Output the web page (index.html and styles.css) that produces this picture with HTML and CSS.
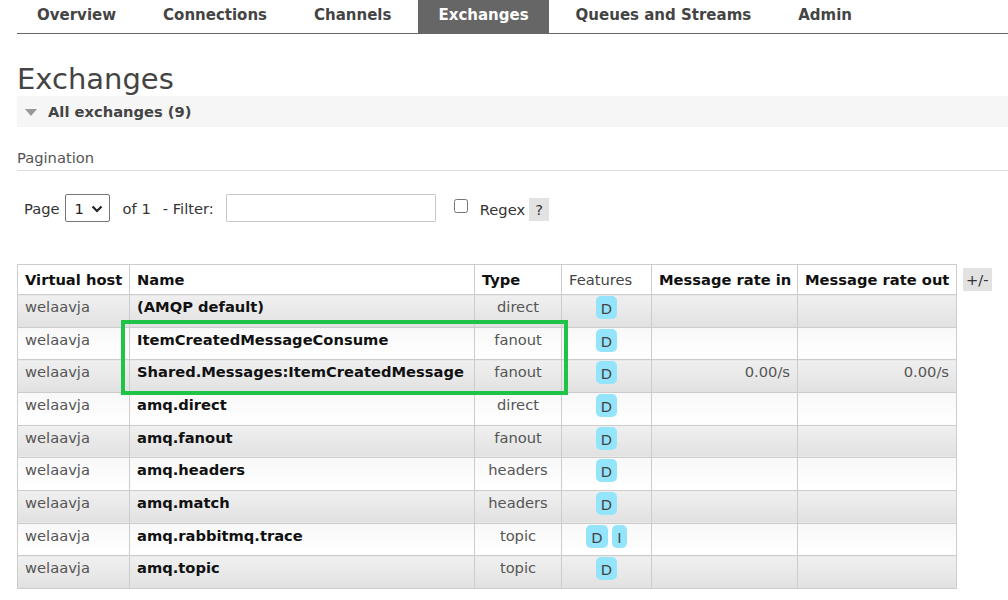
FILE: index.html
```html
<!DOCTYPE html>
<html lang="en">
<head>
<meta charset="utf-8">
<title>Exchanges</title>
<link rel="stylesheet" href="styles.css">
</head>
<body>
<nav class="tabs">
  <ul>
    <li><a>Overview</a></li>
    <li><a>Connections</a></li>
    <li><a>Channels</a></li>
    <li class="active"><a>Exchanges</a></li>
    <li><a>Queues and Streams</a></li>
    <li><a>Admin</a></li>
  </ul>
</nav>
<main class="main">
  <h1 class="title">Exchanges</h1>
  <section class="section">
    <h2 class="section-head"><span class="tri"></span>All exchanges (9)</h2>
    <h3 class="pag-title">Pagination</h3>
    <div class="pager">
      <span class="lbl">Page</span>
      <span class="select-wrap">
        <select class="select"><option>1</option></select>
        <svg class="chev" width="12" height="8" viewBox="0 0 12 8"><path d="M1.5 1.5 L6 6 L10.5 1.5" fill="none" stroke="#222" stroke-width="2.2"/></svg>
      </span>
      <span class="lbl of">of 1</span>
      <span class="lbl filter">- Filter:</span>
      <input class="input" type="text">
      <input class="check" type="checkbox">
      <span class="lbl regex">Regex</span>
      <span class="help">?</span>
    </div>
    <div class="table-wrap">
      <table class="list">
        <colgroup>
          <col class="c-vh"><col class="c-name"><col class="c-type"><col class="c-feat"><col class="c-in"><col class="c-out">
        </colgroup>
        <thead>
          <tr>
            <th>Virtual host</th>
            <th>Name</th>
            <th>Type</th>
            <th class="plain">Features</th>
            <th>Message rate in</th>
            <th>Message rate out</th>
          </tr>
        </thead>
        <tbody>
          <tr class="alt"><td class="vh">welaavja</td><td class="nm">(AMQP default)</td><td class="ty">direct</td><td class="ft"><abbr class="badge">D</abbr></td><td class="rt"></td><td class="rt"></td></tr>
          <tr><td class="vh">welaavja</td><td class="nm">ItemCreatedMessageConsume</td><td class="ty">fanout</td><td class="ft"><abbr class="badge">D</abbr></td><td class="rt"></td><td class="rt"></td></tr>
          <tr class="alt"><td class="vh">welaavja</td><td class="nm">Shared.Messages:ItemCreatedMessage</td><td class="ty">fanout</td><td class="ft"><abbr class="badge">D</abbr></td><td class="rt">0.00/s</td><td class="rt">0.00/s</td></tr>
          <tr><td class="vh">welaavja</td><td class="nm">amq.direct</td><td class="ty">direct</td><td class="ft"><abbr class="badge">D</abbr></td><td class="rt"></td><td class="rt"></td></tr>
          <tr class="alt"><td class="vh">welaavja</td><td class="nm">amq.fanout</td><td class="ty">fanout</td><td class="ft"><abbr class="badge">D</abbr></td><td class="rt"></td><td class="rt"></td></tr>
          <tr><td class="vh">welaavja</td><td class="nm">amq.headers</td><td class="ty">headers</td><td class="ft"><abbr class="badge">D</abbr></td><td class="rt"></td><td class="rt"></td></tr>
          <tr class="alt"><td class="vh">welaavja</td><td class="nm">amq.match</td><td class="ty">headers</td><td class="ft"><abbr class="badge">D</abbr></td><td class="rt"></td><td class="rt"></td></tr>
          <tr><td class="vh">welaavja</td><td class="nm">amq.rabbitmq.trace</td><td class="ty">topic</td><td class="ft"><abbr class="badge">D</abbr> <abbr class="badge">I</abbr></td><td class="rt"></td><td class="rt"></td></tr>
          <tr class="alt"><td class="vh">welaavja</td><td class="nm">amq.topic</td><td class="ty">topic</td><td class="ft"><abbr class="badge">D</abbr></td><td class="rt"></td><td class="rt"></td></tr>
        </tbody>
      </table>
      <span class="plusminus">+/-</span>
      <div class="highlight"></div>
    </div>
  </section>
</main>
</body>
</html>
```

FILE: styles.css
```css
html, body {
  margin: 0;
  padding: 0;
  background: #fff;
}
body {
  font-family: "DejaVu Sans", Verdana, sans-serif;
  font-size: 14.7px;
  color: #484848;
  width: 1008px;
  overflow: hidden;
}

/* tabs */
.tabs ul {
  list-style: none;
  margin: 0 0 0 17px;
  padding: 0;
  display: flex;
  gap: 7px;
  border-bottom: 1px solid #666;
}
.tabs li a {
  display: block;
  height: 33px;
  line-height: 30px;
  padding: 0 20px;
  font-weight: bold;
  font-size: 15px;
  color: #444;
}
.tabs li.active a {
  background: #666;
  color: #fff;
}

.main {
  padding-left: 17px;
}
.title {
  margin: 28px 0 0;
  font-size: 29px;
  line-height: 34px;
  font-weight: normal;
  color: #444;
}

.section-head {
  margin: 0;
  height: 31px;
  line-height: 31px;
  padding-left: 8px;
  background: #f6f6f6;
  font-size: 14.7px;
  font-weight: bold;
  color: #444;
  display: flex;
  align-items: center;
}
.tri {
  width: 0;
  height: 0;
  border-left: 6.5px solid transparent;
  border-right: 6.5px solid transparent;
  border-top: 7px solid #999;
  margin-right: 11px;
  margin-top: 1px;
}

.pag-title {
  margin: 22px 0 0;
  font-size: 14.7px;
  line-height: 17px;
  font-weight: normal;
  color: #555;
  padding-bottom: 4px;
  border-bottom: 1px solid #ddd;
}

.pager {
  margin-top: 23px;
  height: 28px;
  display: flex;
  align-items: center;
  padding-left: 7px;
  color: #333;
}
.lbl { line-height: 17px; }
.select-wrap {
  position: relative;
  margin-left: 5px;
  width: 45px;
  height: 28px;
}
.select {
  -webkit-appearance: none;
  appearance: none;
  width: 45px;
  height: 28px;
  box-sizing: border-box;
  border: 1px solid #767676;
  border-radius: 2px;
  background: #fff;
  font-family: "DejaVu Sans", sans-serif;
  font-size: 14.7px;
  color: #222;
  padding: 0 0 0 9px;
  margin: 0;
}
.chev {
  position: absolute;
  right: 7px;
  top: 11px;
  pointer-events: none;
}
.of { margin-left: 13px; }
.filter { margin-left: 12px; }
.input {
  margin: 0 0 0 12px;
  width: 210px;
  height: 28px;
  box-sizing: border-box;
  border: 1px solid #c8c8c8;
  border-radius: 1px;
  padding: 0 4px;
}
.check {
  margin: 0 0 0 18px;
  width: 14px;
  height: 14px;
  position: relative;
  top: -2px;
}
.regex { margin-left: 12px; position: relative; top: 1px; }
.help {
  margin-left: 4px;
  width: 20px;
  height: 23px;
  line-height: 23px;
  text-align: center;
  background: #e2e2e2;
  color: #333;
  position: relative;
  top: 1px;
}

/* table */
.table-wrap {
  position: relative;
  margin-top: 42px;
  display: flex;
  align-items: flex-start;
}
.list {
  border-collapse: collapse;
  table-layout: fixed;
  width: 939px;
  font-size: 14.7px;
  line-height: 17px;
}
.c-vh { width: 112px; }
.c-name { width: 345px; }
.c-type { width: 87px; }
.c-feat { width: 90px; }
.c-in { width: 146px; }
.c-out { width: 159px; }

.list th, .list td {
  border: 1px solid #ccc;
  white-space: nowrap;
  overflow: hidden;
}
.list th {
  height: 30px;
  box-sizing: border-box;
  padding: 0 7px;
  text-align: left;
  font-weight: bold;
  color: #111;
  background: #fff;
  vertical-align: middle;
}
.list th.plain {
  font-weight: normal;
  color: #444;
}
.list td {
  height: 32.67px;
  box-sizing: border-box;
  padding: 3px 7px 0;
  vertical-align: top;
  background: linear-gradient(#f8f8f8, #fff);
}
.list tr.alt td {
  background: linear-gradient(#f0f0f0, #e1e1e1);
}
.list td.vh { color: #555; }
.list td.nm { font-weight: bold; color: #111; }
.list td.ty { text-align: center; color: #555; }
.list td.ft { text-align: center; padding-top: 1px; }
.list td.rt { text-align: right; color: #555; }

.badge {
  display: inline-block;
  height: 23px;
  line-height: 25px;
  padding: 0 5px;
  border-radius: 5px;
  background: #94e5fc;
  color: #444;
  text-decoration: none;
  border: none;
}

.plusminus {
  margin: 4px 0 0 6px;
  padding: 0 3px;
  height: 23px;
  line-height: 23px;
  background: #e2e2e2;
  color: #333;
}

.highlight {
  position: absolute;
  left: 104px;
  top: 56px;
  width: 447px;
  height: 75px;
  box-sizing: border-box;
  border: 4px solid #1ec447;
  pointer-events: none;
}
```
